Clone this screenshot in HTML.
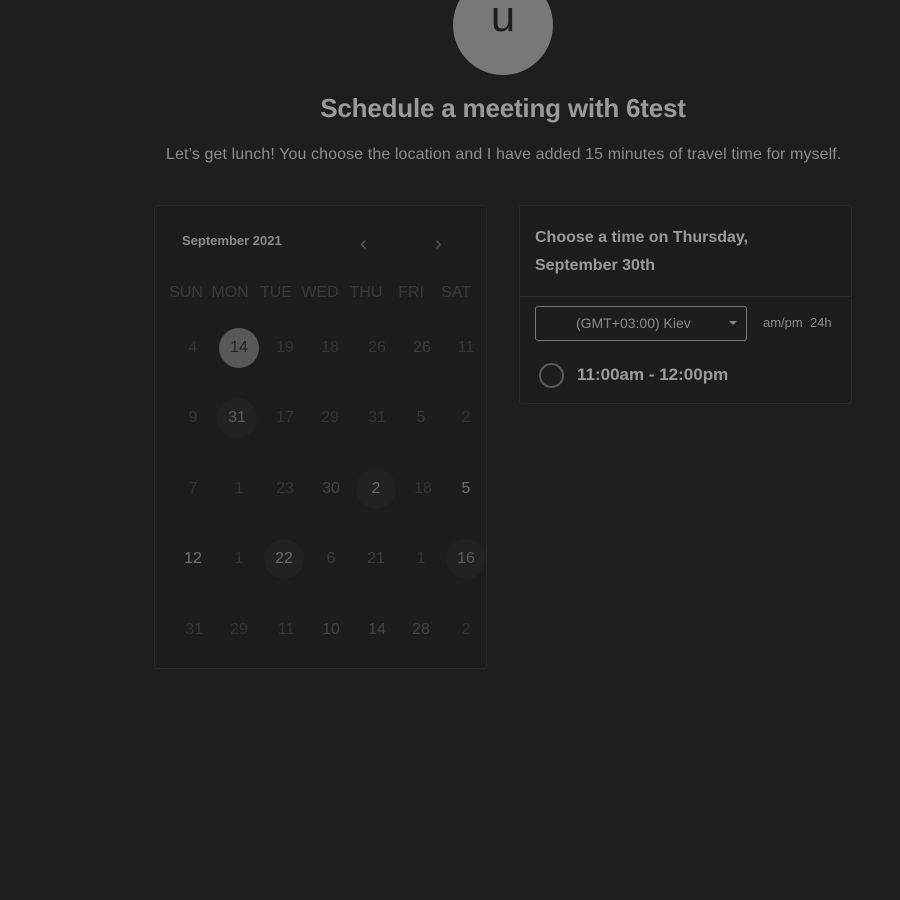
<!DOCTYPE html>
<html><head><style>
body{margin:0;width:900px;height:900px;background:#1e1e1e;font-family:"Liberation Sans",sans-serif;position:relative;overflow:hidden}
.a{position:absolute}
.av{left:453px;top:-25px;width:100px;height:100px;border-radius:50%;background:#787878;color:#1e1e1e;font-size:44px;text-align:center;line-height:84px}
.d{position:absolute;width:40px;height:40px;margin-left:-20px;margin-top:-20px;border-radius:50%;text-align:center;line-height:40px;font-size:16px;color:#363636}
.h{position:absolute;width:50px;margin-left:-25px;text-align:center;font-size:16px;color:#3a3a3a;top:284px}
</style></head><body>
<div class="a av">u</div>
<div class="a" style="left:0;width:1006px;top:93px;text-align:center;font-size:26px;font-weight:bold;color:#9a9a9a;letter-spacing:-0.2px">Schedule a meeting with 6test</div>
<div class="a" style="left:166px;top:146px;font-size:16px;color:#8c8c8c;letter-spacing:0.1px">Let’s get lunch! You choose the location and I have added 15 minutes of travel time for myself.</div>
<div class="a" style="left:154px;top:205px;width:331px;height:462px;border:1px solid #2a2a2a;border-radius:3px;background:#1d1d1d"></div>
<div class="a" style="left:182px;top:233px;font-size:13px;font-weight:bold;color:#8a8a8a">September 2021</div>
<div class="a" style="left:360px;top:233px;font-size:20px;color:#555">‹</div>
<div class="a" style="left:435px;top:233px;font-size:20px;color:#555">›</div>
<div class="h" style="left:186px">SUN</div><div class="h" style="left:230px">MON</div><div class="h" style="left:276px">TUE</div><div class="h" style="left:320px">WED</div><div class="h" style="left:366px">THU</div><div class="h" style="left:411px">FRI</div><div class="h" style="left:456px">SAT</div>
<div class="d" style="left:193px;top:348px">4</div><div class="d" style="left:239px;top:348px;background:#585858;color:#222">14</div><div class="d" style="left:285px;top:348px">19</div><div class="d" style="left:330px;top:348px">18</div><div class="d" style="left:377px;top:348px">26</div><div class="d" style="left:422px;top:348px;color:#3e3e3e">26</div><div class="d" style="left:466px;top:348px">11</div>
<div class="d" style="left:193px;top:418px">9</div><div class="d" style="left:237px;top:418px;background:#222;color:#5a5a5a">31</div><div class="d" style="left:285px;top:418px">17</div><div class="d" style="left:330px;top:418px">29</div><div class="d" style="left:377px;top:418px">31</div><div class="d" style="left:421px;top:418px;color:#3e3e3e">5</div><div class="d" style="left:466px;top:418px">2</div>
<div class="d" style="left:193px;top:489px">7</div><div class="d" style="left:239px;top:489px">1</div><div class="d" style="left:285px;top:489px">23</div><div class="d" style="left:331px;top:489px;color:#444">30</div><div class="d" style="left:376px;top:489px;background:#222;color:#6a6a6a">2</div><div class="d" style="left:423px;top:489px">18</div><div class="d" style="left:466px;top:489px;color:#707070">5</div>
<div class="d" style="left:193px;top:559px;color:#707070">12</div><div class="d" style="left:239px;top:559px">1</div><div class="d" style="left:284px;top:559px;background:#222;color:#6a6a6a">22</div><div class="d" style="left:331px;top:559px;color:#3e3e3e">6</div><div class="d" style="left:376px;top:559px;color:#3e3e3e">21</div><div class="d" style="left:421px;top:559px">1</div><div class="d" style="left:466px;top:559px;background:#222;color:#5a5a5a">16</div>
<div class="d" style="left:194px;top:630px">31</div><div class="d" style="left:239px;top:630px">29</div><div class="d" style="left:286px;top:630px">11</div><div class="d" style="left:331px;top:630px;color:#444">10</div><div class="d" style="left:377px;top:630px;color:#444">14</div><div class="d" style="left:421px;top:630px;color:#444">28</div><div class="d" style="left:466px;top:630px">2</div>
<div class="a" style="left:519px;top:205px;width:331px;height:197px;border:1px solid #2a2a2a;border-radius:3px;background:#1d1d1d"></div>
<div class="a" style="left:519px;top:296px;width:333px;height:1px;background:#2e2e2e"></div>
<div class="a" style="left:535px;top:224px;font-size:16px;font-weight:bold;color:#9a9a9a;line-height:28px">Choose a time on Thursday,<br>September 30th</div>
<div class="a" style="left:535px;top:306px;width:210px;height:33px;border:1px solid #777;border-radius:3px"></div>
<div class="a" style="left:576px;top:315px;font-size:14px;color:#8a8a8a">(GMT+03:00) Kiev</div>
<div class="a" style="left:729px;top:321px;width:0;height:0;border-left:4px solid transparent;border-right:4px solid transparent;border-top:4px solid #888"></div>
<div class="a" style="left:763px;top:315px;font-size:13px;color:#8a8a8a">am/pm&nbsp; 24h</div>
<div class="a" style="left:539px;top:363px;width:21px;height:21px;border:2px solid #5a5a5a;border-radius:50%"></div>
<div class="a" style="left:577px;top:365px;font-size:17px;font-weight:bold;color:#9a9a9a">11:00am - 12:00pm</div>
</body></html>
